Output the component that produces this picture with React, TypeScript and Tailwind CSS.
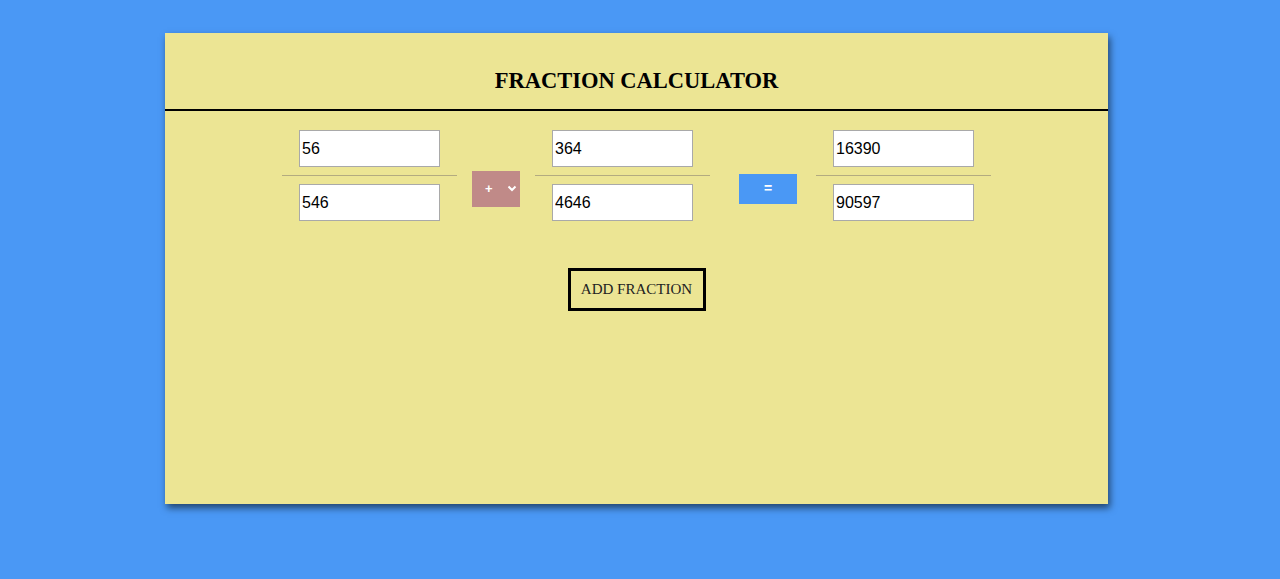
import React from "react";

function Fraction({ top, bottom }: { top: string; bottom: string }) {
  return (
    <div className="flex flex-col items-center w-[175px]">
      <input
        defaultValue={top}
        className="w-[141px] h-[37px] bg-white border border-[#a9a9a9] px-[2px] text-[16px] text-black outline-none"
        style={{ fontFamily: '"Liberation Sans", Arial, sans-serif' }}
      />
      <div className="w-full h-px bg-[#b3ab80] my-[8px]" />
      <input
        defaultValue={bottom}
        className="w-[141px] h-[37px] bg-white border border-[#a9a9a9] px-[2px] text-[16px] text-black outline-none"
        style={{ fontFamily: '"Liberation Sans", Arial, sans-serif' }}
      />
    </div>
  );
}

export default function App() {
  return (
    <div className="min-h-[579px] bg-[#4a98f5] pt-[33px] font-['Liberation_Serif',serif]">
      <div className="ml-[165px] w-[943px] h-[471px] bg-[#ece594] shadow-[2px_4px_7px_rgba(0,0,0,0.55)]">
        <div className="h-[78px] flex items-center justify-center border-b-2 border-black">
          <h1 className="text-[22.5px] font-bold text-black pt-[19px]">FRACTION CALCULATOR</h1>
        </div>

        <div className="flex items-center justify-center pt-[19px] font-['Liberation_Sans',sans-serif]">
          <Fraction top="56" bottom="546" />
          <div className="ml-[15px] mr-[15px] mt-[26px] w-[48px] h-[36px] bg-[#c08a88] flex items-center pl-[13px] gap-[14px] text-white text-[13px] font-bold">
            <span>+</span>
            <svg className="shrink-0" width="10" height="7" viewBox="0 0 10 7" fill="none" stroke="white" strokeWidth="2">
              <path d="M1.5 1.5l3.5 3.5 3.5-3.5" />
            </svg>
          </div>
          <Fraction top="364" bottom="4646" />
          <button className="ml-[29px] mr-[19px] mt-[26px] w-[58px] h-[30px] bg-[#4a98f5] text-white text-[14px] font-bold flex items-center justify-center">
            =
          </button>
          <Fraction top="16390" bottom="90597" />
        </div>

        <div className="flex justify-center mt-[47px]">
          <button className="w-[138px] h-[43px] border-[3px] border-black text-[15px] text-[#222]">
            ADD FRACTION
          </button>
        </div>
      </div>
    </div>
  );
}
